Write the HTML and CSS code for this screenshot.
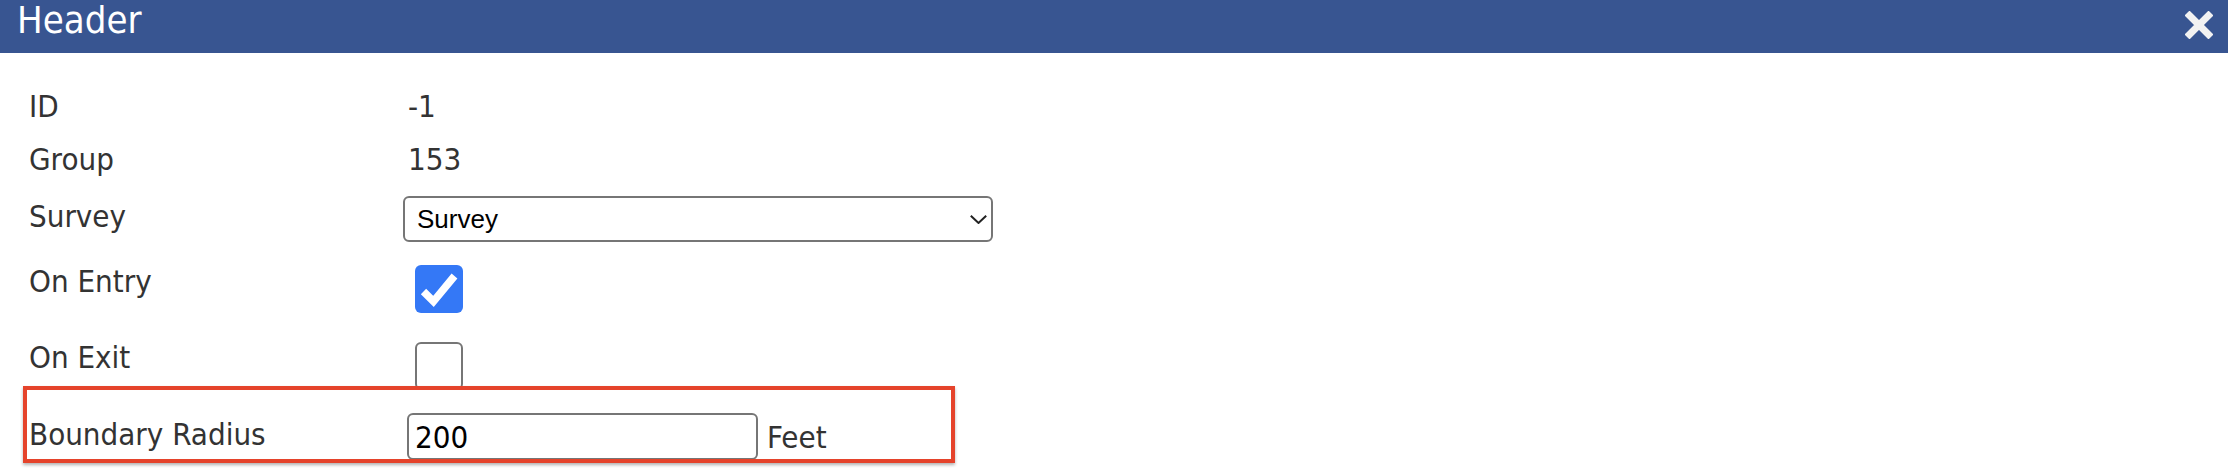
FILE: index.html
```html
<!DOCTYPE html>
<html lang="en">
<head>
<meta charset="utf-8">
<title>Header</title>
<link rel="stylesheet" href="styles.css">
</head>
<body>
<div class="dialog">
  <header class="titlebar">
    <h1 class="title">Header</h1>
    <button class="close" type="button" aria-label="Close">
      <svg width="28" height="28" viewBox="0 0 28 28" aria-hidden="true">
        <path d="M4.5 4.5 L23.5 23.5 M23.5 4.5 L4.5 23.5" stroke="#f2f2f2" stroke-width="7" stroke-linecap="square" fill="none"/>
      </svg>
    </button>
  </header>
  <div class="body">
    <div class="form">
      <div class="lbl">ID</div>
      <div class="val"><span class="text">-1</span></div>

      <div class="lbl">Group</div>
      <div class="val"><span class="text">153</span></div>

      <div class="lbl lbl-up-s">Survey</div>
      <div class="val">
        <div class="select-wrap">
          <select class="select"><option>Survey</option></select>
          <svg class="chevron" width="17" height="9" viewBox="0 0 17 9" aria-hidden="true">
            <polyline points="0.8,0.8 8.5,8 16.2,0.8" fill="none" stroke="#222" stroke-width="2"/>
          </svg>
        </div>
      </div>

      <div class="lbl lbl-up-l">On Entry</div>
      <div class="val">
        <span class="check checked" role="checkbox" aria-checked="true">
          <svg width="48" height="48" viewBox="0 0 48 48" aria-hidden="true">
            <polyline points="8.5,26.5 18.5,36.5 39.5,11" fill="none" stroke="#fff" stroke-width="7.5"/>
          </svg>
        </span>
      </div>

      <div class="lbl lbl-up-l">On Exit</div>
      <div class="val">
        <span class="check" role="checkbox" aria-checked="false"></span>
      </div>

      <div class="lbl lbl-up-s">Boundary Radius</div>
      <div class="val val-row">
        <input class="input" type="text" value="200">
        <span class="unit">Feet</span>
      </div>
    </div>
    <div class="highlight"></div>
  </div>
</div>
</body>
</html>
```

FILE: styles.css
```css
html, body {
  margin: 0;
  padding: 0;
  background: #ffffff;
}

.dialog {
  width: 2228px;
  font-family: "DejaVu Sans Condensed", "DejaVu Sans", sans-serif;
  font-stretch: condensed;
  color: #333333;
}

.titlebar {
  height: 53px;
  background: #385591;
  display: flex;
  align-items: flex-start;
  justify-content: space-between;
  padding: 0 15px 0 17px;
  box-sizing: border-box;
}

.title {
  margin: 0;
  font-family: "DejaVu Sans Condensed", "DejaVu Sans", sans-serif;
  font-stretch: condensed;
  font-weight: normal;
  font-size: 38px;
  line-height: 40px;
  color: #ffffff;
}

.close {
  margin: 11px 0 0 0;
  padding: 0;
  border: 0;
  background: none;
  width: 28px;
  height: 28px;
  display: block;
}

.close svg {
  display: block;
}

.body {
  position: relative;
  height: 417px;
}

.form {
  display: grid;
  grid-template-columns: 376px 1fr;
  grid-template-rows: 50px 56px 64px 76px 77px 65px;
  align-items: center;
  padding: 28px 0 0 29px;
}

.lbl {
  font-size: 31px;
  line-height: 36px;
  color: #333333;
  white-space: nowrap;
}

.lbl-up-s {
  padding-bottom: 6px;
}

.lbl-up-l {
  padding-bottom: 17px;
}

.val {
  display: flex;
  align-items: center;
}

.text {
  font-size: 31px;
  line-height: 36px;
  color: #333333;
  padding-left: 3px;
}

.select-wrap {
  position: relative;
  margin-left: -2px;
  width: 590px;
  height: 46px;
}

.select {
  appearance: none;
  -webkit-appearance: none;
  width: 590px;
  height: 46px;
  box-sizing: border-box;
  border: 2px solid #767676;
  border-radius: 6px;
  background: #ffffff;
  padding: 0 0 0 12px;
  font-family: "Liberation Sans", Arial, sans-serif;
  font-size: 26px;
  color: #000000;
  margin: 0;
}

.chevron {
  position: absolute;
  right: 6px;
  top: 19px;
  display: block;
}

.check {
  display: block;
  width: 48px;
  height: 48px;
  box-sizing: border-box;
  margin-left: 10px;
  border: 2px solid #767676;
  border-radius: 6px;
  background: #ffffff;
}

.check.checked {
  border: 0;
  background: #3478f6;
}

.check svg {
  display: block;
}

.val-row {
  gap: 9px;
}

.input {
  margin: 0 0 0 2px;
  width: 351px;
  height: 47px;
  box-sizing: border-box;
  border: 2px solid #767676;
  border-radius: 6px;
  padding: 0 0 0 6px;
  font-family: "DejaVu Sans Condensed", "DejaVu Sans", sans-serif;
  font-stretch: condensed;
  font-size: 31px;
  color: #000000;
  background: #ffffff;
}

.unit {
  font-size: 31px;
  line-height: 36px;
  color: #333333;
}

.highlight {
  position: absolute;
  left: 23px;
  top: 333px;
  width: 932px;
  height: 77px;
  box-sizing: border-box;
  border: 4px solid #e5432b;
  box-shadow: 0 2px 3px rgba(0, 0, 0, 0.3);
  pointer-events: none;
}
```
